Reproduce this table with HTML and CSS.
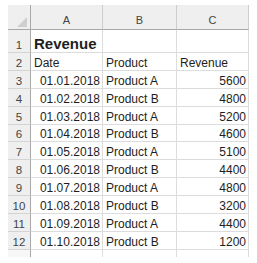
FILE: index.html
```html
<!DOCTYPE html>
<html>
<head>
<meta charset="utf-8">
<link rel="stylesheet" href="styles.css">
</head>
<body>
<div class="sheet">
  <div class="corner"></div>
  <div class="colhead">A</div>
  <div class="colhead">B</div>
  <div class="colhead">C</div>

  <div class="rowhead">1</div>
  <div class="cell title">Revenue</div>
  <div class="cell"></div>
  <div class="cell"></div>

  <div class="rowhead">2</div>
  <div class="cell">Date</div>
  <div class="cell">Product</div>
  <div class="cell">Revenue</div>

  <div class="rowhead">3</div>
  <div class="cell num">01.01.2018</div>
  <div class="cell">Product A</div>
  <div class="cell num">5600</div>

  <div class="rowhead">4</div>
  <div class="cell num">01.02.2018</div>
  <div class="cell">Product B</div>
  <div class="cell num">4800</div>

  <div class="rowhead">5</div>
  <div class="cell num">01.03.2018</div>
  <div class="cell">Product A</div>
  <div class="cell num">5200</div>

  <div class="rowhead">6</div>
  <div class="cell num">01.04.2018</div>
  <div class="cell">Product B</div>
  <div class="cell num">4600</div>

  <div class="rowhead">7</div>
  <div class="cell num">01.05.2018</div>
  <div class="cell">Product A</div>
  <div class="cell num">5100</div>

  <div class="rowhead">8</div>
  <div class="cell num">01.06.2018</div>
  <div class="cell">Product B</div>
  <div class="cell num">4400</div>

  <div class="rowhead">9</div>
  <div class="cell num">01.07.2018</div>
  <div class="cell">Product A</div>
  <div class="cell num">4800</div>

  <div class="rowhead">10</div>
  <div class="cell num">01.08.2018</div>
  <div class="cell">Product B</div>
  <div class="cell num">3200</div>

  <div class="rowhead">11</div>
  <div class="cell num">01.09.2018</div>
  <div class="cell">Product A</div>
  <div class="cell num">4400</div>

  <div class="rowhead">12</div>
  <div class="cell num">01.10.2018</div>
  <div class="cell">Product B</div>
  <div class="cell num">1200</div>

  <div class="rowhead stub"></div>
  <div class="cell stub"></div>
  <div class="cell stub"></div>
  <div class="cell stub"></div>
</div>
</body>
</html>
```
FILE: styles.css
```css
html, body {
  margin: 0;
  padding: 0;
  background: #ffffff;
}
body {
  padding: 5px 0 0 8px;
  font-family: "Liberation Sans", Arial, sans-serif;
}
.sheet {
  display: grid;
  grid-template-columns: 23px 72px 74px 72px;
  grid-template-rows: 25px 23px repeat(11, 17.9px) 7px;
}
.sheet > div {
  box-sizing: border-box;
  display: flex;
  align-items: flex-end;
  white-space: nowrap;
  overflow: hidden;
}
.corner {
  background: #efefef;
  border-right: 1px solid #a9a9a9;
  border-bottom: 1px solid #a9a9a9;
  justify-content: flex-end;
  padding: 0 3px 2px 0;
}
.corner::after {
  content: "";
  width: 10px;
  height: 10px;
  background: #cfcfcf;
  clip-path: polygon(100% 0, 100% 100%, 0 100%);
}
.colhead {
  background: #efefef;
  border-right: 1px solid #cdcdcd;
  border-bottom: 1px solid #a9a9a9;
  justify-content: center;
  color: #444;
  font-size: 11px;
  line-height: 11px;
  padding-bottom: 3px;
}
.rowhead {
  background: #efefef;
  border-right: 1px solid #a9a9a9;
  border-bottom: 1px solid #d4d4d4;
  justify-content: center;
  color: #444;
  font-size: 11.5px;
  line-height: 12px;
  padding-bottom: 1px;
}
.cell {
  border-right: 1px solid #dcdcdc;
  border-bottom: 1px solid #dcdcdc;
  color: #1e1e1e;
  font-size: 12px;
  line-height: 12px;
  padding: 0 2px 1px 3px;
}
.num {
  justify-content: flex-end;
}
.title {
  font-weight: bold;
  font-size: 15px;
  line-height: 15px;
  padding-bottom: 1px;
  overflow: visible;
}
.stub {
  border-bottom: none;
}
.rowhead.stub {
  background: #f7f7f7;
}
```
